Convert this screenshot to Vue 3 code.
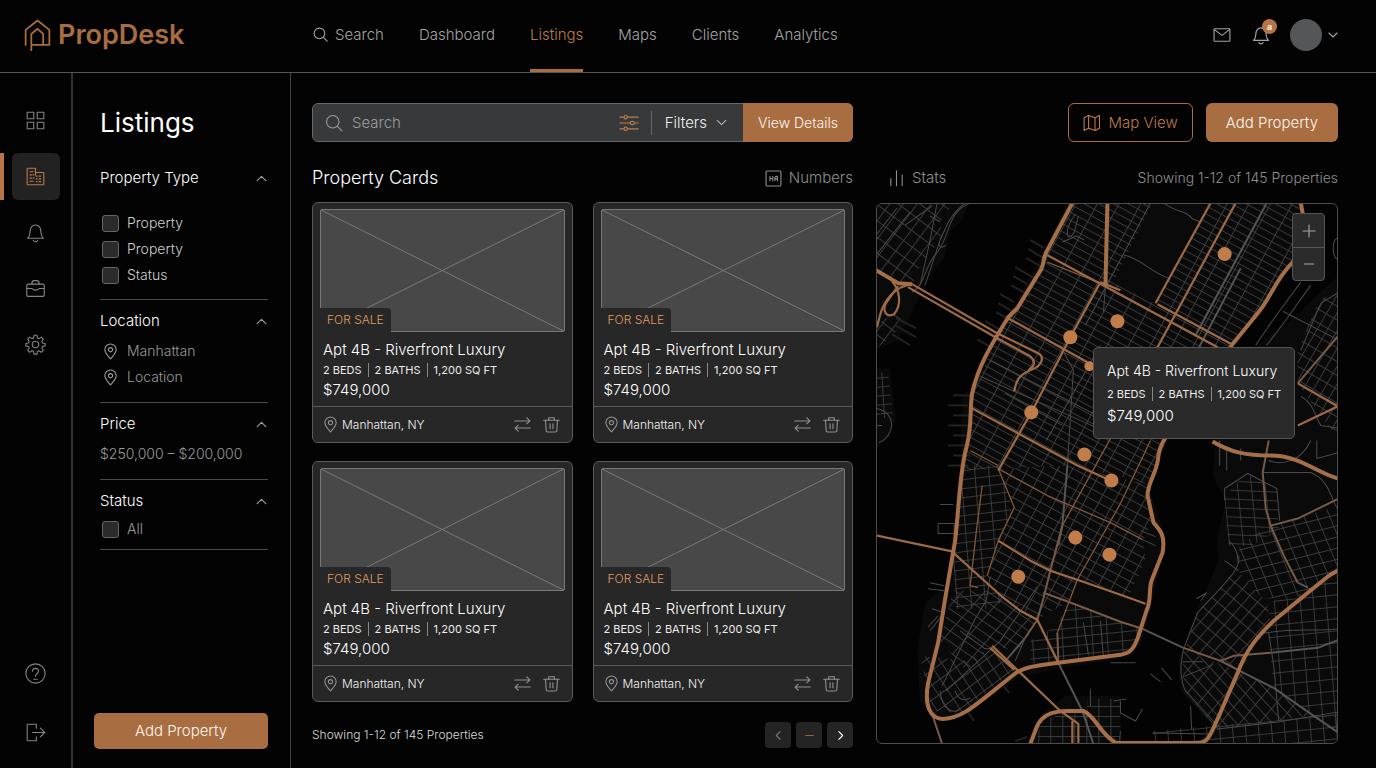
<script setup>
import { h, ref } from 'vue'

const glyphs = {
  search: ['M10.5 3a7.5 7.5 0 1 0 0 15a7.5 7.5 0 1 0 0-15', 'M16 16l5.5 5.5'],
  mail: ['M3.5 4.5h17a1 1 0 0 1 1 1v13a1 1 0 0 1-1 1h-17a1 1 0 0 1-1-1v-13a1 1 0 0 1 1-1z', 'M3 5.500l9 7l9-7'],
  bell: ['M3 18.500h18c-2-1.500-2.500-3.500-2.700-6.500c-.2-5.500-2-8.500-6.300-8.500s-6.100 3-6.300 8.500c-.2 3-.7 5-2.700 6.500z', 'M9.500 21a2.600 2.200 0 0 0 5 0'],
  down: ['M4 8l8 8l8-8'],
  up: ['M4 16l8-8l8 8'],
  left: ['M15 5l-7 7l7 7'],
  right: ['M9 5l7 7l-7 7'],
  minus: ['M5 12h14'],
  plus: ['M12 3v18', 'M3 12h18'],
  grid: ['M2.500 2.500h7.500v7.500h-7.500z', 'M14 2.500h7.500v7.500h-7.500z', 'M2.500 14h7.500v7.500h-7.500z', 'M14 14h7.500v7.500h-7.500z'],
  building: ['M1.500 22.500v-20a1 1 0 0 1 1-1h9.500v5.500h9.500a1 1 0 0 1 1 1v13.500a1 1 0 0 1-1 1z', 'M5 6h4M5 10h2M9 10h1M5 14h2M9 14h1M5 18h4', 'M12 7v3M13 11.500h1M16.500 11.500h2M13 15h1M16.500 15h2M13 18.500h1M16.500 18.500h2'],
  briefcase: ['M3.500 7h17a1.500 1.500 0 0 1 1.500 1.500v11a1.500 1.500 0 0 1-1.500 1.500h-17a1.500 1.500 0 0 1-1.500-1.500v-11a1.500 1.500 0 0 1 1.500-1.500z', 'M8 7v-1.500a2.500 2.500 0 0 1 2.500-2.500h3a2.500 2.500 0 0 1 2.500 2.500v1.500', 'M2 12h6c1.500 2.500 6.500 2.500 8 0h6'],
  gear: ['M10.300 1.500h3.400l.5 3l1.800.8l2.600-1.700l2.300 2.300l-1.700 2.600l.8 1.800l3 .5v2.800l-3 .6l-.8 1.800l1.700 2.600l-2.300 2.300l-2.600-1.700l-1.800.8l-.5 3h-3.400l-.5-3l-1.800-.8l-2.600 1.700l-2.300-2.300l1.700-2.600l-.8-1.800l-3-.6v-2.800l3-.5l.8-1.800l-1.700-2.600l2.300-2.300l2.600 1.700l1.800-.8z', 'M12 8.300a3.700 3.700 0 1 0 0 7.400a3.700 3.700 0 1 0 0-7.400'],
  help: ['M12 1a11 11 0 1 0 0 22a11 11 0 1 0 0-22', 'M8.500 9.500c0-4.500 7-4.500 7 0c0 2.500-3.500 2.500-3.500 5.500', 'M10 18.500h4'],
  logout: ['M13 7v-4.500h-9.500a1 1 0 0 0-1 1v17a1 1 0 0 0 1 1h9.500v-4.500', 'M8.500 12h14', 'M17.500 7l5 5l-5 5'],
  pin: ['M12 22.500c-4-5-8-8.500-8-13a8 8 0 0 1 16 0c0 4.500-4 8-8 13z', 'M12 6.500a3 3 0 1 0 0 6a3 3 0 1 0 0-6'],
  sliders: ['M1 5h5M10 5h13', 'M8 3a2 2 0 1 0 0 4a2 2 0 1 0 0-4', 'M1 12h12M19 12h4', 'M16 10a2.500 2 0 1 0 0 4a2.500 2 0 1 0 0-4', 'M1 19h5M10 19h13', 'M8 17a2 2 0 1 0 0 4a2 2 0 1 0 0-4'],
  map: ['M1.500 5l6-3l8.500 3l6-3v17l-6 3l-8.500-3l-6 3z', 'M7.500 2v17', 'M16 5v17'],
  numbers: ['M3 1.500h18a1.500 1.500 0 0 1 1.500 1.500v18a1.500 1.500 0 0 1-1.500 1.500h-18a1.500 1.500 0 0 1-1.500-1.500v-18a1.500 1.500 0 0 1 1.500-1.500z', 'M7 9v6M7.500 12h3M11 9v6', 'M14 15v-4.500l1.500-1.500h2v6M14 12.500h3'],
  stats: ['M4 12v10M12 1v21M20 7v15'],
  swap: ['M1 7h21M18 2.500l4.500 4.500l-4.500 4', 'M23 17h-21M6 13l-4.500 4l4.500 4.500'],
  trash: ['M1 6h22', 'M8 6v-3.500h8v3.500', 'M3.500 6l1 15a2 2 0 0 0 2 1.500h11a2 2 0 0 0 2-1.500l1-15', 'M10 11v7M14 11v7'],
}

const Icon = (props) =>
  h(
    'svg',
    { class: 'icon', viewBox: '0 0 24 24', 'aria-hidden': 'true' },
    glyphs[props.name].map((d) => h('path', { d, 'vector-effect': 'non-scaling-stroke' })),
  )
Icon.props = ['name']

const nav = ['Dashboard', 'Listings', 'Maps', 'Clients', 'Analytics']
const rail = [
  { icon: 'grid', label: 'Overview' },
  { icon: 'building', label: 'Listings' },
  { icon: 'bell', label: 'Alerts' },
  { icon: 'briefcase', label: 'Portfolio' },
  { icon: 'gear', label: 'Settings' },
]
const types = ['Property', 'Property', 'Status']
const places = ['Manhattan', 'Location']
const cards = [1, 2, 3, 4]
const home = {
  title: 'Apt 4B - Riverfront Luxury',
  specs: ['2 BEDS', '2 BATHS', '1,200 SQ FT'],
  price: '$749,000',
  place: 'Manhattan, NY',
}
const query = ref('')

// Street grids: m = pattern matrix, w/h = block size
const grids = [
  { id: 'uptown', m: '.879 .476 -.477 .879 1047 255', w: 19, h: 7 },
  { id: 'downtown', m: '.879 .476 -.477 .879 998 468', w: 13, h: 9 },
  { id: 'village', m: '.99 -.12 .08 .99 960 470', w: 14, h: 9 },
  { id: 'tribeca', m: '.82 .57 -.66 .75 940 590', w: 17, h: 9 },
  { id: 'tip', m: '.8 -.6 .55 .83 930 700', w: 10, h: 12 },
  { id: 'south', m: '.99 -.1 .06 .99 1060 610', w: 15, h: 9 },
  { id: 'jersey', m: '.8 .6 -.6 .8 876 203', w: 11, h: 13 },
  { id: 'green', m: '.99 .04 .1 .99 1222 480', w: 14, h: 9 },
  { id: 'willi', m: '.76 .65 -.66 .75 1235 565', w: 10, h: 13 },
  { id: 'bush', m: '.97 -.24 .38 .92 1270 530', w: 12, h: 11 },
  { id: 'clinton', m: '.99 -.1 .08 .99 1273 600', w: 13, h: 12 },
  { id: 'fort', m: '.67 .74 -.64 .76 1183 650', w: 15, h: 9 },
  { id: 'queens', m: '.86 .5 -.5 .86 1290 320', w: 9, h: 12 },
  { id: 'dumbo', m: '1 0 0 1 1086 705', w: 12, h: 10 },
]
const land = [
  'M876 203H969L962 220L950 232L944 258L928 280L912 312L898 340L876 350Z',
  'M876 368H890L896 420L887 440L876 448Z',
  'M1066 203H1303L1296 262L1277 285L1257 316L1232 345L1180 420L1160 455L1149 490L1165 535L1158 575L1150 610L1140 645L1127 657L1058 668L1020 676L962 716L940 721L920 700L917 650L925 602L945 585L954 520L960 465L962 400L1008 316L1047 245Z',
  'M1338 275L1290 320L1250 350L1215 445L1212 475L1225 500L1216 540L1218 560L1195 612L1178 660L1180 690L1212 725L1210 743H1338Z',
  'M1030 743L1040 715L1065 695H1120V743Z',
]
const districts = [
  { g: 'uptown', d: 'M1072 203H1152L1113 282L1155 304L1210 203H1300L1303 215L1292 262L1257 313L1231 344L1165 440L1150 485L1120 476L1067 465L960 470L965 452L972 395L997 337L1017 308L1047 252Z' },
  { g: 'downtown', d: 'M998 468L1067 465L1150 485L1153 522L1142 539L1145 560L1128 596L1077 579L1068 601L1037 619L1003 597L987 575L998 540L1014 507Z' },
  { g: 'village', d: 'M961 465H998L1012 507L985 580L1003 597L996 608H956L953 560Z' },
  { g: 'tribeca', d: 'M953 590H1000L1037 619L1018 650L992 645L966 670L940 640Z' },
  { g: 'tip', d: 'M920 655L966 660L992 645L1015 668L962 712L932 710Z' },
  { g: 'south', d: 'M1030 640L1057 625L1068 601L1142 628L1130 650L1030 664Z' },
  { g: 'jersey', d: 'M876 203H956L942 216L940 240L920 265L912 285L890 281L876 270Z' },
  { g: 'jersey', d: 'M876 325L895 312L904 322L890 338L876 348Z' },
  { g: 'south', d: 'M876 372H888L893 415L876 420Z' },
  { g: 'green', d: 'M1224 496L1245 473L1277 490L1278 530L1250 545L1228 545Z' },
  { g: 'bush', d: 'M1239 545L1262 528L1338 505V570L1300 596L1262 598L1236 568Z' },
  { g: 'willi', d: 'M1235 568L1266 602L1270 622L1240 668L1184 650L1197 612Z' },
  { g: 'clinton', d: 'M1273 600L1310 590L1338 572V743H1338V732L1310 713L1273 687L1266 622Z' },
  { g: 'fort', d: 'M1183 650L1243 672L1273 687L1312 714L1217 729L1182 688Z' },
  { g: 'clinton', d: 'M1152 730L1338 714V743H1152Z' },
  { g: 'queens', d: 'M1318 300L1338 291V440L1297 383V350Z' },
  { g: 'dumbo', d: 'M1040 720L1066 712L1087 713V698H1120V743H1036Z' },
]
const minor = [
  'M1163 203C1178 214 1184 209 1192 219L1200 222', 'M1123 255C1140 258 1150 272 1168 278',
  'M1075 214C1062 232 1067 244 1074 232L1078 216M1062 242L1076 236L1084 240',
  'M970 203C945 213 951 238 935 255C925 265 925 285 912 292',
  'M964 204C948 216 944 232 940 240L925 285M937 203L930 240L920 285M945 230C938 240 936 252 946 245',
  'M905 225L932 206M876 255L910 212M876 235L897 208M930 216L940 222',
  'M877 408C896 412 896 435 879 442M876 425H882',
  'M1105 287L1103 312M1067 465L1073 370L1060 345M1150 203L1085 325M1100 345L1046 440',
  'M990 360L1110 422M980 376L1080 420L1115 436M1005 393L1062 425',
  'M1238 555C1240 570 1226 580 1197 612L1183 648C1179 665 1180 680 1185 690L1217 725',
  'M1182 661H1202M1182 676L1212 664M1224 560L1238 570M1190 705L1191 728',
  'M1152 732L1210 733M1217 728L1277 721L1338 711',
  'M1268 632L1273 665L1278 720M1260 633C1290 627 1310 631 1338 628',
  'M1224 500V488L1247 473L1276 488L1279 520M1228 540C1240 550 1236 560 1238 562',
  'M1262 472L1310 472C1330 480 1331 503 1338 510M1310 440C1300 462 1280 465 1268 460M1316 440V458L1338 452',
  'M1320 303L1338 292M1320 303L1300 350M1282 311L1338 340M1300 282L1272 320L1255 345M1310 285L1285 320L1266 345',
  'M1219 440V465M1226 446V470M1240 448V460M1300 396C1312 402 1314 415 1320 425L1338 428',
  'M1338 237C1330 240 1331 258 1338 260',
  'M990 576L986 600L975 618L942 685M1037 586L1000 640L946 690M1015 660L1025 637',
  'M932 608L944 612L930 630M938 615L928 626M960 630L985 648H992M940 690C942 712 955 712 960 708M955 690C958 700 965 700 970 697',
  'M1120 700V712L1135 720L1142 708M1113 700L1126 698M1120 730L1119 743M1090 688V705',
  'M1150 673L1160 681M1161 667L1171 679M1200 600L1206 592L1196 598',
  'M938 523H954V533H938ZM930 582L944 585M928 588L944 590M940 504H953M1110 662H1135',
  'M1100 620L1103 656M1083 622L1088 654M1142 539L1155 545M1140 530L1155 536',
]
const piers = Array.from({ length: 11 }, (_, i) => `M${1030 - i * 5 + (i % 3) * 3} ${240 + i * 9}l${14 + (i % 2) * 5} ${8 + (i % 2) * 3}`)
  .concat(Array.from({ length: 8 }, (_, i) => `M${953 - (i % 2) * 5} ${395 + i * 10}h${17 + (i % 2) * 3}`))
  .concat(['M977 339l14 8', 'M895 325l21 12', 'M892 334l18 11', 'M896 318l20 10', 'M1002 684l7 8', 'M968 712l6 8', 'M1015 740l12 -4'])

const grey = [
  'M1067 465L1062 525L1058 545', 'M1266 203L1195 335', 'M1240 268L1168 405',
  'M1142 628L1183 647', 'M1243 672L1273 687L1310 713L1338 732', 'M1058 662L1082 710L1093 743',
  'M1270 652L1317 647L1338 639', 'M1297 582L1307 587', 'M1025 637L1007 658',
]
const brown = [
  'M1062 525L1050 570L1043 598L1037 619L1025 637', 'M1043 592L1068 601L1120 621L1142 628', 'M1183 647L1220 660L1243 672',
  'M1268 440L1262 472L1265 508L1270 525L1283 555L1297 582', 'M1270 525L1297 518L1338 498',
  'M1220 660L1233 655L1270 652', 'M932 713L942 743', 'M1057 632L1058 662', 'M1297 383L1338 335',
]
const thin = [
  'M998 468L1047 495L1110 522L1142 539', 'M998 468L1014 507L998 540L987 575', 'M1047 262L1100 283',
  'M982 485L976 532L970 585L978 587', 'M1150 440L1120 503L1077 579L1057 632',
  'M970 450L998 465', 'M1142 375L1120 420L1062 525',
]
const medium = [
  'M1047 255L1110 289L1217 347', 'M1157 304L1231 344', 'M1210 203L1155 303', 'M1235 203L1157 347L1120 420',
  'M1100 282L1070 337L1031 412L998 470', 'M1100 282L1120 290', 'M1008 318L1087 362', 'M972 408L1077 465L1110 480',
  'M998 540L1030 560L1050 570L1077 579L1120 594L1145 603', 'M877 535L953 551', 'M953 552L1003 597L1020 610L1037 619L1058 662',
  'M992 645L1018 670L1060 710L1078 723V743M990 647L1014 669M1072 720V743',
  'M1297 383L1337 406L1297 425', 'M912 284L997 333L1036 352C1046 356 1041 366 1032 369C1018 375 1016 380 1014 391',
  'M908 287L997 338L1030 356C1036 362 1034 366 1028 370',
  'M892 281C900 290 902 305 894 314C886 318 882 310 886 303L898 286',
  'M912 284C895 286 884 300 880 315L877 327',
]
const major = [
  'M1072 203L1047 250C1043 256 1044 262 1041 269L1017 308L1008 317C992 343 978 365 972 393C969 410 973 425 965 452C959 480 959 505 955 540L945 598L938 642L928 682C924 705 930 718 943 718C964 717 976 703 1017 671C1030 664 1045 664 1058 662L1120 654C1128 652 1132 651 1137 638L1146 610C1151 600 1148 590 1151 580L1162 552C1165 535 1160 530 1153 522L1147 495C1147 482 1157 472 1158 455C1160 440 1170 430 1190 405L1231 345L1257 313C1270 298 1274 280 1292 262L1306 235L1300 203',
  'M1107 203L1105 287', 'M876 270L898 283L912 284',
  'M1030 743L1036 727C1042 710 1060 710 1067 710H1083C1096 716 1100 734 1116 742H1200C1208 740 1210 733 1217 718L1237 672C1245 650 1256 636 1273 620L1307 592L1328 575L1338 569',
  'M1212 441C1230 452 1246 455 1270 455C1300 455 1318 474 1338 478',
]
const pins = [[1224, 254], [1117, 321], [1070, 337], [1089, 366], [1031, 412], [1084, 454], [1111, 480], [1075, 537], [1109, 554], [1018, 576]]
</script>

<template>
  <div class="app">
    <header class="topbar">
      <a class="brand" href="#">
        <svg class="logo" viewBox="0 0 26 32" aria-hidden="true">
          <path d="M1.500 26V10.500L13 1.500L24.500 10.500V25H7V14.500L13 9.500L18.500 14.500V25M7 24V31" />
        </svg>
        <span>PropDesk</span>
      </a>
      <nav class="nav" aria-label="Main">
        <a class="nav-link" href="#"><Icon name="search" />Search</a>
        <a v-for="n in nav" :key="n" class="nav-link" :class="{ active: n === 'Listings' }" href="#">{{ n }}</a>
      </nav>
      <div class="account">
        <button class="plain" aria-label="Messages"><Icon name="mail" /></button>
        <button class="plain alert" aria-label="Notifications"><Icon name="bell" /><span class="count">a</span></button>
        <button class="plain user" aria-label="Account"><span class="avatar"></span><Icon name="down" /></button>
      </div>
    </header>

    <div class="body">
      <nav class="rail" aria-label="Sections">
        <a v-for="r in rail" :key="r.icon" class="rail-link" :class="{ current: r.icon === 'building' }" href="#" :aria-label="r.label"><Icon :name="r.icon" /></a>
        <a class="rail-link low" href="#" aria-label="Help"><Icon name="help" /></a>
        <a class="rail-link" href="#" aria-label="Log out"><Icon name="logout" /></a>
      </nav>

      <aside class="filters">
        <h1>Listings</h1>
        <section class="group first">
          <h2><button class="plain fold">Property Type<Icon name="up" /></button></h2>
          <label v-for="(t, i) in types" :key="i" class="row light"><input type="checkbox" />{{ t }}</label>
        </section>
        <section class="group">
          <h2><button class="plain fold">Location<Icon name="up" /></button></h2>
          <a v-for="p in places" :key="p" class="row" href="#"><Icon name="pin" />{{ p }}</a>
        </section>
        <section class="group">
          <h2><button class="plain fold">Price<Icon name="up" /></button></h2>
          <p class="row">$250,000 – $200,000</p>
        </section>
        <section class="group last">
          <h2><button class="plain fold">Status<Icon name="up" /></button></h2>
          <label class="row"><input type="checkbox" />All</label>
        </section>
        <button class="solid">Add Property</button>
      </aside>

      <main class="content">
        <div class="column">
          <form class="searchbar" @submit.prevent>
            <label class="field"><Icon name="search" /><input v-model="query" type="search" placeholder="Search" aria-label="Search listings" /></label>
            <button type="button" class="plain tune" aria-label="Adjust"><Icon name="sliders" /></button>
            <button type="button" class="plain drop">Filters<Icon name="down" /></button>
            <button class="details">View Details</button>
          </form>
          <div class="heading">
            <h2>Property Cards</h2>
            <span class="tag"><Icon name="numbers" />Numbers</span>
          </div>
          <div class="cards">
            <article v-for="c in cards" :key="c" class="card">
              <div class="photo">
                <svg viewBox="0 0 100 50" preserveAspectRatio="none" aria-hidden="true"><path d="M0 0L100 50M100 0L0 50" vector-effect="non-scaling-stroke" /></svg>
                <span class="badge">FOR SALE</span>
              </div>
              <div class="facts">
                <h3>{{ home.title }}</h3>
                <p class="specs"><span v-for="s in home.specs" :key="s">{{ s }}</span></p>
                <p class="price">{{ home.price }}</p>
              </div>
              <footer>
                <Icon name="pin" />
                <span class="place">{{ home.place }}</span>
                <button class="plain" aria-label="Compare"><Icon name="swap" /></button>
                <button class="plain" aria-label="Delete"><Icon name="trash" /></button>
              </footer>
            </article>
          </div>
          <div class="pager">
            <span>Showing 1-12 of 145 Properties</span>
            <button class="page dim" aria-label="Previous"><Icon name="left" /></button>
            <button class="page gold" aria-label="Current page"><Icon name="minus" /></button>
            <button class="page" aria-label="Next"><Icon name="right" /></button>
          </div>
        </div>

        <div class="column side">
          <div class="actions">
            <button class="outline"><Icon name="map" />Map View</button>
            <button class="solid">Add Property</button>
          </div>
          <div class="heading">
            <span class="tag stats"><Icon name="stats" />Stats</span>
            <span class="tag total">Showing 1-12 of 145 Properties</span>
          </div>
          <div class="map">
            <svg class="streets" viewBox="876 203 462 540" preserveAspectRatio="xMinYMin slice" role="img" aria-label="Map of Manhattan">
              <defs>
                <pattern v-for="g in grids" :id="g.id" :key="g.id" :width="g.w" :height="g.h" patternUnits="userSpaceOnUse" :patternTransform="`matrix(${g.m})`">
                  <path class="block" :d="`M0 .5H${g.w}M.5 0V${g.h}`" />
                </pattern>
              </defs>
              <path v-for="(d, i) in land" :key="'l' + i" class="land" :d="d" />
              <path v-for="(d, i) in districts" :key="'d' + i" :d="d.d" :fill="`url(#${d.g})`" />
              <path v-for="(d, i) in piers" :key="'p' + i" class="pier" :d="d" />
              <path v-for="(d, i) in minor" :key="'m' + i" class="road minor" :d="d" />
              <path v-for="(d, i) in grey" :key="'g' + i" class="road grey" :d="d" />
              <path v-for="(d, i) in brown" :key="'b' + i" class="road brown" :d="d" />
              <path v-for="(d, i) in thin" :key="'t' + i" class="road thin" :d="d" />
              <path v-for="(d, i) in medium" :key="'n' + i" class="road medium" :d="d" />
              <path v-for="(d, i) in major" :key="'j' + i" class="road major" :d="d" />
              <circle v-for="(p, i) in pins" :key="'c' + i" class="marker" :cx="p[0]" :cy="p[1]" :r="i === 3 ? 5 : 7" />
            </svg>
            <div class="zoom">
              <button class="plain" aria-label="Zoom in"><Icon name="plus" /></button>
              <button class="plain" aria-label="Zoom out"><Icon name="minus" /></button>
            </div>
            <div class="popup">
              <h3>{{ home.title }}</h3>
              <p class="specs"><span v-for="s in home.specs" :key="s">{{ s }}</span></p>
              <p class="price">{{ home.price }}</p>
            </div>
          </div>
        </div>
      </main>
    </div>
  </div>
</template>

<style>
body { background: #030303; }
</style>

<style scoped>
* { box-sizing: border-box; }
.app {
  --bronze: #a96d42;
  --line: #4b4b4b;
  min-height: 100vh;
  display: flex;
  flex-direction: column;
  background: #030303;
  color: #fff;
  font: 300 15px/20px Inter, "Liberation Sans", sans-serif;
}
h1, h2, h3, p { margin: 0; font-weight: inherit; }
a { color: inherit; text-decoration: none; }
button { font: inherit; color: inherit; cursor: pointer; }
.plain { background: none; border: 0; padding: 0; display: flex; align-items: center; }
.icon { width: 20px; height: 20px; flex: none; fill: none; stroke: currentColor; stroke-width: 1.1px; stroke-linejoin: round; stroke-linecap: round; }

.topbar { display: flex; align-items: stretch; height: 73px; padding: 0 37px 0 24px; border-bottom: 1px solid #555; color: #a3a3a3; }
.brand { flex: 0 0 288px; display: flex; align-items: center; gap: 7px; padding-bottom: 2px; color: var(--bronze); font-size: 27px; font-weight: 600; }
.logo { width: 27px; height: 33px; fill: none; stroke: currentColor; stroke-width: 1.700; stroke-linejoin: round; }
.nav { display: flex; gap: 35px; }
.nav-link { display: flex; align-items: center; gap: 6px; border-bottom: 3px solid transparent; }
.nav-link .icon { width: 17px; height: 17px; }
.active { color: #bd7a4b; border-bottom-color: var(--bronze); }
.account { margin-left: auto; display: flex; align-items: center; gap: 19px; padding-bottom: 3px; }
.alert { position: relative; }
.count { position: absolute; top: -6px; right: -6px; width: 15px; height: 15px; border-radius: 50%; background: #b87445; color: #fff; font-size: 9px; line-height: 15px; font-weight: 600; text-align: center; }
.user { gap: 5px; }
.user .icon { width: 12px; height: 12px; }
.avatar { width: 32px; height: 32px; border-radius: 50%; background: #555658; }

.body { flex: 1; display: flex; }
.rail { flex: 0 0 73px; display: flex; flex-direction: column; align-items: center; gap: 9px; padding: 24px 0 12px; border-right: 2px solid #333; color: #858585; }
.rail-link { width: 48px; height: 47px; display: flex; align-items: center; justify-content: center; border-radius: 6px; }
.rail-link .icon { width: 21px; height: 21px; }
.current { position: relative; background: #222; color: #b8784a; }
.current::before { content: ""; position: absolute; left: -12px; top: 0; bottom: 0; width: 4px; background: #b87445; }
.rail .current .icon { width: 19px; height: 19px; }
.low { margin-top: auto; margin-bottom: 3px; }

.filters { flex: 0 0 218px; display: flex; flex-direction: column; padding: 32px 22px 19px 21px; border-right: 1px solid #444; }
.filters h1 { margin-left: 6px; font-size: 26px; line-height: 36px; font-weight: 400; }
.group { margin-left: 6px; padding: 9px 0 12px; border-bottom: 1px solid var(--line); }
.group h2 { font-size: 15px; line-height: 24px; margin-bottom: 5px; }
.fold { width: 100%; height: 24px; justify-content: space-between; }
.fold .icon { width: 13px; height: 13px; color: #a0a0a0; }
.first { padding-top: 25px; padding-bottom: 11px; }
.first h2 { margin-bottom: 20px; }
.last { padding-bottom: 7px; }
.last h2 { margin-bottom: 3px; }
.row { display: flex; align-items: center; gap: 7px; height: 26px; color: #9a9a9a; font-size: 14px; }
.light { color: #cfcfcf; }
.row .icon { width: 17px; height: 17px; margin: 0 1px 0 2px; }
.row input { appearance: none; width: 17px; height: 17px; margin: 0 1px 0 2px; border: 1px solid #666; border-radius: 3px; background: #2b2b2b; }
.row input:checked { background: var(--bronze); }
.solid { border: 0; border-radius: 6px; background: var(--bronze); color: #fff6ee; height: 38px; padding: 0 20px; }
.filters .solid { margin-top: auto; height: 36px; border-radius: 5px; }

.content { flex: 1; min-width: 0; display: grid; grid-template-columns: 541fr 462fr; gap: 23px; padding: 30px 38px 20px 21px; }
.column { display: flex; flex-direction: column; min-width: 0; }
.side { padding-bottom: 4px; }
.searchbar { display: flex; align-items: center; height: 39px; border: 1px solid #65676a; border-radius: 6px; background: #38393b; }
.field { flex: 1; display: flex; align-items: center; gap: 8px; padding-left: 11px; color: #999; min-width: 0; }
.field input { flex: 1; min-width: 0; border: 0; padding: 0; outline: 0; background: none; color: #eee; font: inherit; }
.field input::placeholder { color: #9c9c9c; opacity: 1; }
.tune { color: #b87d50; padding-right: 12px; }
.drop { height: 24px; border-left: 1px solid #66686a; padding: 0 16px 0 13px; gap: 8px; color: #f0f0f0; }
.drop .icon { width: 13px; height: 13px; color: #b5b5b5; }
.details { width: 110px; height: 39px; flex: none; margin: -1px; border: 0; border-radius: 0 6px 6px 0; padding: 0; background: var(--bronze); color: #fff6ee; font-size: 14px; }
.heading { display: flex; align-items: center; justify-content: space-between; height: 60px; padding-top: 12px; }
.heading h2 { font-size: 18px; line-height: 24px; }
.side .heading { margin-bottom: 1px; }
.tag { display: flex; align-items: center; gap: 7px; color: #8f8f8f; }
.tag .icon { width: 17px; height: 17px; }
.total { font-size: 14px; }
.stats { padding-left: 12px; }
.cards { display: grid; grid-template-columns: 1fr 1fr; gap: 18px 20px; }
.card { border: 1px solid #5a5a5a; border-radius: 6px; background: #272727; }
.photo { position: relative; margin: 6px 7px 0; height: 123px; background: #484848; border: 1px solid #777; border-radius: 2px; }
.photo svg { display: block; width: 100%; height: 100%; fill: none; stroke: #787878; stroke-width: 1px; }
.badge { position: absolute; left: -1px; bottom: -1px; padding: 3px 7px; border-radius: 0 4px 0 0; background: #272727; color: #e09c64; font-size: 12px; line-height: 18px; }
.facts { padding: 8px 10px 6px; }
h3 { font-size: 15px; line-height: 20px; }
.specs { display: flex; align-items: center; height: 20px; font-size: 11px; font-weight: 400; line-height: 14px; white-space: nowrap; color: #ececec; }
.specs span + span { margin-left: 6px; padding-left: 6px; border-left: 1px solid #888; }
.price { font-size: 15px; line-height: 20px; }
.card footer { display: flex; align-items: center; height: 36px; padding: 0 12px 0 9px; border-top: 1px solid #5a5a5a; color: #909090; }
.card footer .icon { width: 17px; height: 17px; }
.place { flex: 1; margin-left: 3px; font-size: 12px; color: #f4f4f4; }
.card footer .plain { margin-left: 12px; }
.pager { display: flex; align-items: center; gap: 5px; margin-top: auto; font-size: 12px; color: #dcdcdc; }
.pager span { margin-right: auto; }
.page { width: 26px; height: 26px; display: flex; align-items: center; justify-content: center; border: 0; border-radius: 4px; padding: 0; background: #242424; color: #fff; }
.page .icon { width: 13px; height: 13px; }
.dim { color: #777; }
.gold { color: #8a6a3c; }
.actions { display: flex; justify-content: flex-end; gap: 13px; }
.outline { display: flex; align-items: center; gap: 8px; height: 39px; padding: 0 14px; border: 1px solid var(--bronze); border-radius: 6px; background: none; color: #bd7a4b; }
.outline .icon { width: 18px; height: 18px; }
.actions .solid { height: 39px; }

.map { position: relative; flex: 1; overflow: hidden; border: 1px solid #4e4e4e; border-radius: 6px; background: #030303; }
.streets { position: absolute; left: -1px; top: -1px; width: calc(100% + 2px); height: calc(100% + 2px); }
.land { fill: #0a0a0a; }
.block { fill: none; stroke: #444; stroke-width: .8; }
.pier { fill: none; stroke: #222; stroke-width: 2; }
.road { fill: none; stroke-linejoin: round; }
.minor { stroke: #4a4a4a; }
.grey { stroke: #555; stroke-width: 2; }
.brown { stroke: #765b48; stroke-width: 2; }
.thin { stroke: #80583c; stroke-width: 1.300; }
.medium { stroke: #9c6a46; stroke-width: 2.200; }
.major { stroke: #a57049; stroke-width: 4; }
.marker { fill: #c07c49; }
.zoom { position: absolute; top: 9px; right: 12px; width: 33px; border: 1px solid #555; border-radius: 4px; background: #2b2b2b; color: #aaa; }
.zoom .plain { width: 100%; height: 33px; justify-content: center; }
.zoom .plain + .plain { border-top: 1px solid #555; }
.zoom .icon { width: 16px; height: 16px; }
.popup { position: absolute; left: 216px; top: 143px; padding: 13px 13px 12px; border: 1px solid #555; border-radius: 5px; background: #2a2a2a; }
.popup h3 { font-size: 14px; }
.popup .specs { margin: 3px 0 2px; }
</style>
